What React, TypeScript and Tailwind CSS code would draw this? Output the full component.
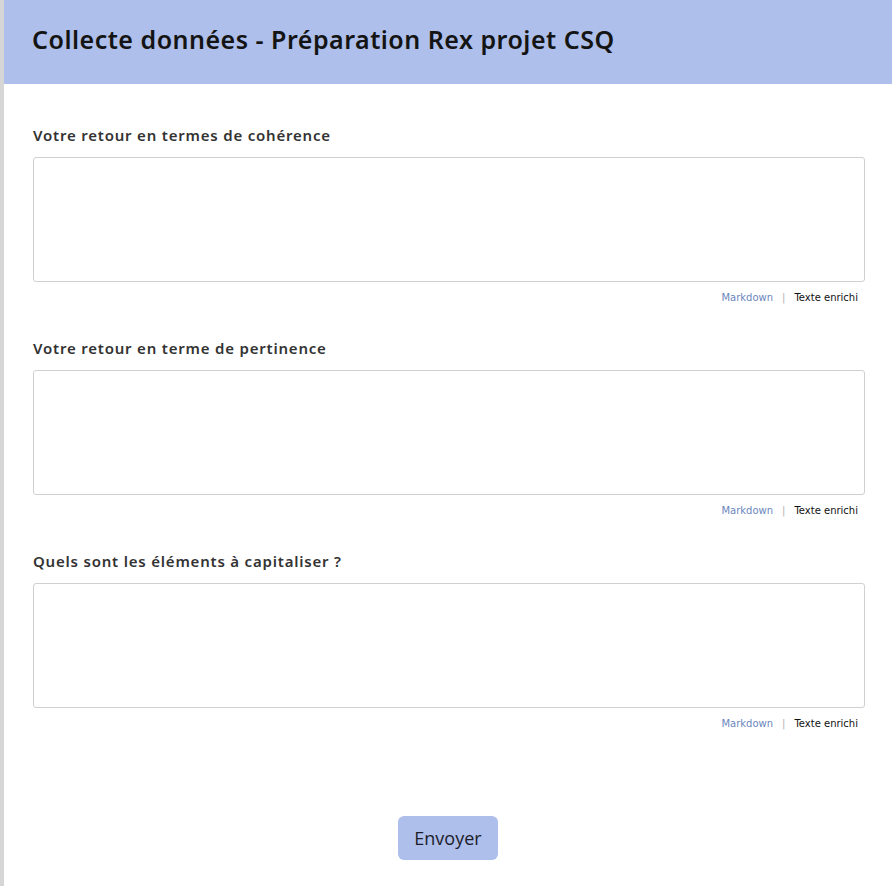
import React from 'react';

const fields = [
  'Votre retour en termes de cohérence',
  'Votre retour en terme de pertinence',
  'Quels sont les éléments à capitaliser ?',
];

const FieldBlock: React.FC<{ label: string }> = ({ label }) => (
  <div className="flex flex-col">
    <label className="text-[15px] leading-[20px] font-semibold tracking-[0.8px] text-[#333333] mb-[12px] font-['Noto_Sans',sans-serif]">
      {label}
    </label>
    <textarea className="h-[125px] w-full resize-none rounded-[3px] border border-[#d0d0d0] bg-white outline-none" />
    <div className="mt-[9px] flex items-center justify-end gap-[9px] pr-[7px] text-[10px] leading-[14px] font-['DejaVu_Sans',sans-serif]">
      <span className="text-[#6b86bd]">Markdown</span>
      <span className="text-[#b0b0b0]">|</span>
      <span className="text-[#111111]">Texte enrichi</span>
    </div>
  </div>
);

export default function App() {
  return (
    <div className="flex min-h-[886px] w-[892px] bg-white">
      <div className="w-[4px] shrink-0 bg-[#d6d6d6]" />
      <div className="flex flex-1 flex-col">
        <header className="flex h-[84px] items-center bg-[#adbfea] pl-[28px] pb-[4px]">
          <h1 className="text-[25px] font-semibold tracking-[0.5px] text-[#141414] font-['Noto_Sans',sans-serif]">
            Collecte données - Préparation Rex projet CSQ
          </h1>
        </header>
        <main className="flex flex-col gap-[33px] pl-[29px] pr-[27px] pt-[41px]">
          {fields.map((f) => (
            <FieldBlock key={f} label={f} />
          ))}
        </main>
        <div className="flex justify-center pt-[85px]">
          <button className="h-[44px] w-[100px] rounded-[6px] bg-[#adbfea] text-[18px] text-[#1c1c2a] font-['Open_Sans',sans-serif]">
            Envoyer
          </button>
        </div>
      </div>
    </div>
  );
}
